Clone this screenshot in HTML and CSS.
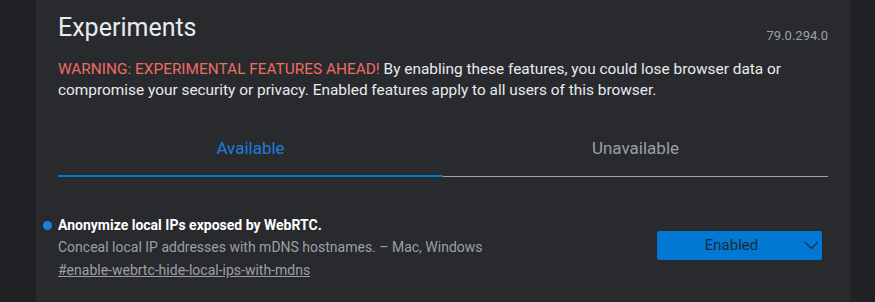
FILE: index.html
```html
<!DOCTYPE html>
<html>
<head>
    <title>Experiments</title>
    <link rel="stylesheet" href="styles.css">
</head>
<body>
<div class="page">
    <div class="header">
        <h1>Experiments</h1>
        <span class="version">79.0.294.0</span>
    </div>
    <p class="blurb">
        <span class="warning">WARNING: EXPERIMENTAL FEATURES AHEAD!</span> By enabling these features, you could lose browser data or
        compromise your security or privacy. Enabled features apply to all users of this browser.
    </p>
    <div class="tabs">
        <div class="tab selected">Available</div>
        <div class="tab">Unavailable</div>
    </div>
    <div class="experiment">
        <div class="experiment-text">
            <h2><span class="dot"></span>Anonymize local IPs exposed by WebRTC.</h2>
            <p class="description">Conceal local IP addresses with mDNS hostnames. – Mac, Windows</p>
            <a class="permalink" href="#enable-webrtc-hide-local-ips-with-mdns">#enable-webrtc-hide-local-ips-with-mdns</a>
        </div>
        <div class="experiment-actions">
            <div class="select">
                <span>Enabled</span>
                <svg class="chevron" width="15" height="9" viewBox="0 0 15 9">
                    <path d="M1 1l6.5 6.5 6.5-6.5" fill="none" stroke="#1f2a36" stroke-width="1.2"/>
                </svg>
            </div>
        </div>
    </div>
</div>
</body>
</html>
```

FILE: styles.css
```css
html, body {
    margin: 0;
    height: 100%;
}

body {
    font-family: Roboto, "Liberation Sans", sans-serif;
    background-color: #202124;
    color: #e8eaed;
}

.page {
    margin: 0 25px 0 36px;
    min-height: 100%;
    padding: 0 22px;
    background-color: #292a2e;
    box-sizing: border-box;
}

.header {
    display: flex;
    justify-content: space-between;
    align-items: flex-end;
    padding-top: 13px;
}

h1 {
    margin: 0;
    font-size: 25px;
    font-weight: 400;
    line-height: 30px;
    color: #e8eaed;
}

.version {
    font-size: 13px;
    line-height: 16px;
    margin-bottom: -1px;
    color: #9aa0a6;
}

.blurb {
    margin: 16px 0 0;
    font-size: 15.4px;
    line-height: 21px;
    color: #e8eaed;
}

.warning {
    color: #ee6c60;
}

.tabs {
    display: flex;
    margin-top: 37px;
}

.tab {
    flex: 1;
    text-align: center;
    font-size: 17px;
    line-height: 20px;
    padding-bottom: 18px;
    color: #9aa0a6;
    border-bottom: 1px solid #9aa0a6;
}

.tab.selected {
    color: #1a7fdc;
    border-bottom: 2px solid #0078d4;
    padding-bottom: 17px;
}

.experiment {
    display: flex;
    align-items: center;
    justify-content: space-between;
    margin-top: 40px;
}

h2 {
    position: relative;
    margin: 0;
    font-size: 14px;
    font-weight: 700;
    line-height: 17px;
    color: #ffffff;
}

.dot {
    position: absolute;
    left: -15px;
    top: 4px;
    width: 9px;
    height: 9px;
    border-radius: 50%;
    background-color: #1a7fe0;
}

.description {
    margin: 4px 0 0;
    font-size: 14px;
    line-height: 18px;
    color: #9aa0a6;
}

.permalink {
    display: inline-block;
    margin-top: 5px;
    font-size: 14px;
    line-height: 18px;
    color: #9aa0a6;
    text-decoration: underline;
}

.experiment-actions {
    padding-bottom: 5px;
    margin-right: 6px;
}

.select {
    position: relative;
    width: 165px;
    height: 29px;
    border-radius: 2px;
    background-color: #0078d4;
    color: #1f2a36;
    font-size: 15px;
    line-height: 29px;
    text-align: center;
    box-sizing: border-box;
    padding-right: 16px;
}

.chevron {
    position: absolute;
    right: 3px;
    top: 10px;
}
```
